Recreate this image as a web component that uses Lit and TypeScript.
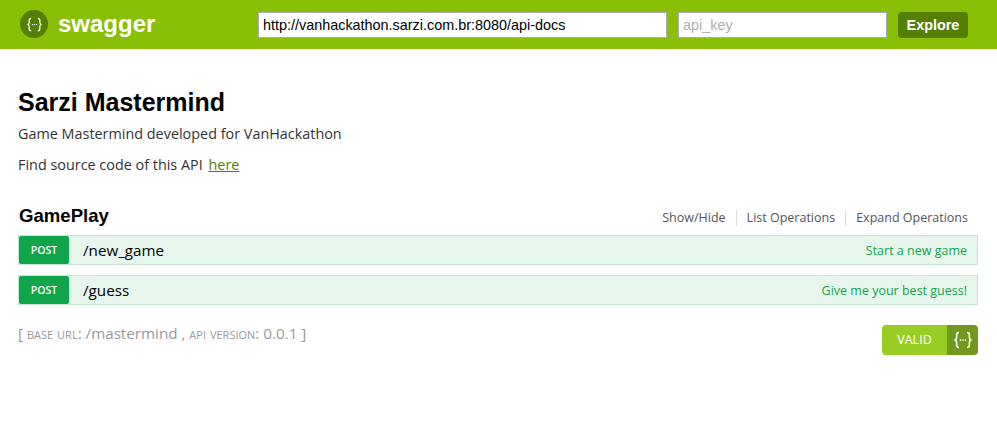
import { css, html, LitElement, svg } from 'lit';
import { customElement } from 'lit/decorators.js';

type Operation = { path: string; summary: string };

const OPERATIONS: Operation[] = [
    { path: '/new_game', summary: 'Start a new game' },
    { path: '/guess', summary: 'Give me your best guess!' },
];

// the {...} mark, used in the header logo and in the validator badge
const braces = svg`
    <path d="M6 1.5C3.8 1.5 3.6 2.6 3.6 4.2V6.6C3.6 8 3 8.8 1.5 9C3 9.2 3.6 10 3.6 11.4V13.8C3.6 15.4 3.8 16.5 6 16.5" fill="none" stroke="currentColor" stroke-width="1.5"/>
    <path d="M14 1.5C16.2 1.5 16.4 2.6 16.4 4.2V6.6C16.4 8 17 8.8 18.5 9C17 9.2 16.4 10 16.4 11.4V13.8C16.4 15.4 16.2 16.5 14 16.5" fill="none" stroke="currentColor" stroke-width="1.5"/>
    <rect x="6.9" y="8.4" width="1.4" height="1.4" fill="currentColor"/>
    <rect x="9.3" y="8.4" width="1.4" height="1.4" fill="currentColor"/>
    <rect x="11.7" y="8.4" width="1.4" height="1.4" fill="currentColor"/>
`;

@customElement('app-root')
export class AppRoot extends LitElement {

    static styles = css`
        :host {
            display: block;
            height: 422px;
            background: #fff;
            font-family: "Open Sans", "Noto Sans", sans-serif;
            color: #333;
        }
        .header {
            display: flex;
            align-items: center;
            height: 49px;
            box-sizing: border-box;
            padding: 0 29px 0 20px;
            background: #89bf04;
        }
        .logo-mark {
            display: flex;
            align-items: center;
            justify-content: center;
            width: 28px;
            height: 28px;
            margin-top: -1px;
            border-radius: 50%;
            background: #547f00;
            color: #fff;
        }
        .logo-mark svg {
            width: 17px;
            height: 15px;
        }
        .logo-text {
            width: 200px;
            margin-left: 10px;
            margin-top: -2px;
            font: 700 24px/1 "Liberation Sans", sans-serif;
            color: #fff;
        }
        .field {
            box-sizing: border-box;
            height: 26px;
            padding: 0 4px;
            border: 1px solid #a9a9c0;
            background: #fff;
            font: 14.4px/24px "Liberation Sans", sans-serif;
            white-space: nowrap;
        }
        .url {
            width: 409px;
            color: #000;
        }
        .key {
            width: 209px;
            margin-left: 11px;
            color: #b0b0b0;
        }
        .explore {
            box-sizing: border-box;
            width: 70px;
            height: 26px;
            margin-left: 11px;
            border-radius: 4px;
            background: #547f00;
            color: #fff;
            font: 700 14.4px/26px "Liberation Sans", sans-serif;
            text-align: center;
        }
        .content {
            padding: 39px 19px 0 18px;
        }
        h1 {
            margin: 0;
            font: 700 25px/28px "Liberation Sans", sans-serif;
            color: #000;
        }
        .desc {
            margin: 8px 0 0;
            font-size: 14.4px;
            line-height: 20px;
        }
        .desc + .desc {
            margin-top: 11px;
        }
        .desc a {
            margin-left: 2px;
            color: #547f00;
            text-decoration: underline;
        }
        .resource {
            display: flex;
            align-items: center;
            justify-content: space-between;
            margin-top: 29px;
            height: 26px;
        }
        h2 {
            margin: -2px 0 0 1px;
            font: 700 18.6px/26px "Liberation Sans", sans-serif;
            color: #000;
        }
        .links {
            display: flex;
            align-items: center;
            margin-top: 2px;
            font-size: 12.5px;
            color: #555;
        }
        .links span {
            padding: 0 10px;
            line-height: 16px;
            border-right: 1px solid #ddd;
        }
        .links span:last-child {
            border-right: none;
        }
        .op {
            display: flex;
            align-items: center;
            box-sizing: border-box;
            height: 30px;
            margin-top: 10px;
            padding: 0 10px 0 0;
            border: 1px solid #c3e8d1;
            background: #e7f6ec;
        }
        .resource + .op {
            margin-top: 5px;
        }
        .method {
            flex: none;
            width: 50px;
            height: 28px;
            border-radius: 2px;
            background: #10a54a;
            color: #fff;
            font-size: 10.5px;
            font-weight: 600;
            line-height: 29px;
            text-align: center;
        }
        .path {
            flex: 1;
            margin-left: 14px;
            font-size: 15.2px;
            color: #000;
        }
        .summary {
            font-size: 12.5px;
            color: #10a54a;
        }
        .footer {
            display: flex;
            justify-content: space-between;
            margin-top: 16px;
        }
        .info {
            font-size: 15.2px;
            line-height: 24px;
            color: #999;
        }
        .info small {
            font-size: 15.2px;
            font-variant: small-caps;
            text-transform: lowercase;
        }
        .badge {
            display: flex;
            height: 30px;
            margin-top: 4px;
            border-radius: 4px;
            overflow: hidden;
            color: #fff;
        }
        .badge-label {
            width: 65px;
            background: #97cd25;
            font-size: 12.5px;
            line-height: 30px;
            text-align: center;
        }
        .badge-mark {
            display: flex;
            align-items: center;
            justify-content: center;
            width: 31px;
            background: #71991e;
        }
        .badge-mark svg {
            width: 20px;
            height: 18px;
        }
    `;

    render() {
        return html`
          <div class="header">
            <div class="logo-mark"><svg viewBox="0 0 20 18">${braces}</svg></div>
            <div class="logo-text">swagger</div>
            <div class="field url">http://vanhackathon.sarzi.com.br:8080/api-docs</div>
            <div class="field key">api_key</div>
            <div class="explore">Explore</div>
          </div>
          <div class="content">
            <h1>Sarzi Mastermind</h1>
            <p class="desc">Game Mastermind developed for VanHackathon</p>
            <p class="desc">Find source code of this API <a href="#">here</a></p>
            <div class="resource">
              <h2>GamePlay</h2>
              <div class="links">
                <span>Show/Hide</span>
                <span>List Operations</span>
                <span>Expand Operations</span>
              </div>
            </div>
            ${OPERATIONS.map((op) => html`
              <div class="op">
                <div class="method">POST</div>
                <div class="path">${op.path}</div>
                <div class="summary">${op.summary}</div>
              </div>`)}
            <div class="footer">
              <div class="info">[ <small>BASE URL</small>: /mastermind , <small>API VERSION</small>: 0.0.1 ]</div>
              <div class="badge">
                <div class="badge-label">VALID</div>
                <div class="badge-mark"><svg viewBox="0 0 20 18">${braces}</svg></div>
              </div>
            </div>
          </div>`;
    }
}
